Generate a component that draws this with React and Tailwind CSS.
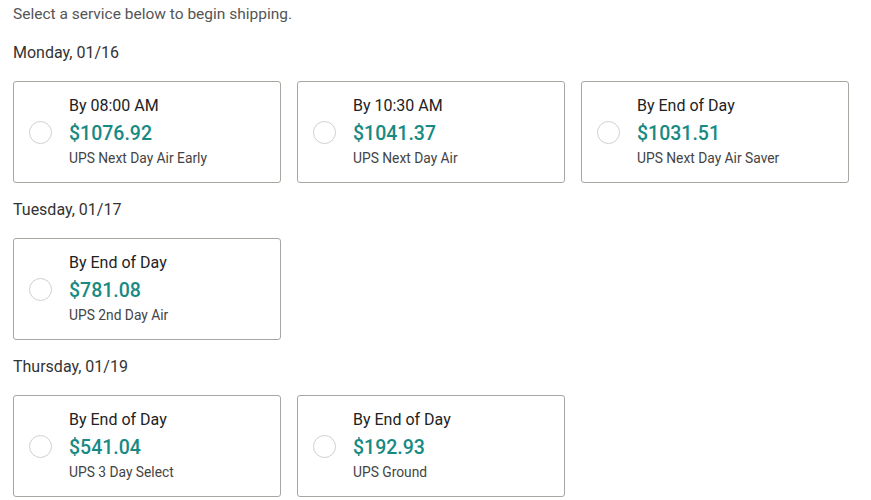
import React from 'react';

const days = [
    {
        label: 'Monday, 01/16',
        options: [
            { time: 'By 08:00 AM', price: '$1076.92', service: 'UPS Next Day Air Early' },
            { time: 'By 10:30 AM', price: '$1041.37', service: 'UPS Next Day Air' },
            { time: 'By End of Day', price: '$1031.51', service: 'UPS Next Day Air Saver' },
        ],
    },
    {
        label: 'Tuesday, 01/17',
        options: [{ time: 'By End of Day', price: '$781.08', service: 'UPS 2nd Day Air' }],
    },
    {
        label: 'Thursday, 01/19',
        options: [
            { time: 'By End of Day', price: '$541.04', service: 'UPS 3 Day Select' },
            { time: 'By End of Day', price: '$192.93', service: 'UPS Ground' },
        ],
    },
];

const ServiceCard = ({ option }) => (
    <label className="flex items-center w-[268px] h-[102px] border border-[#a9a6a1] rounded-[3px] bg-white cursor-pointer">
        <span className="ml-[15px] mr-[17px] w-[23px] h-[23px] rounded-full border border-[#d3d0cb] shrink-0"></span>
        <div className="flex flex-col pb-[2px]">
            <span className="text-[16px] leading-[20px] text-[#222]">{option.time}</span>
            <span className="text-[19.5px] leading-[26px] font-medium text-[#178a83] mt-[5px]">{option.price}</span>
            <span className="text-[13.8px] leading-[18px] text-[#444] mt-[2px]">{option.service}</span>
        </div>
    </label>
);

export default function App() {
    return (
        <div className="bg-white min-h-[500px] px-[13px] pt-[3px] font-['Roboto',sans-serif]">
            <p className="text-[15.5px] leading-[22px] text-[#555]">Select a service below to begin shipping.</p>
            {days.map((day, i) => (
                <section key={day.label} className={i === 0 ? 'mt-[18px]' : 'mt-[17px]'}>
                    <h3 className="text-[16px] leading-[20px] text-[#333]">{day.label}</h3>
                    <div className="flex gap-[16px] mt-[18px]">
                        {day.options.map((o) => (
                            <ServiceCard key={o.service} option={o} />
                        ))}
                    </div>
                </section>
            ))}
        </div>
    );
}
